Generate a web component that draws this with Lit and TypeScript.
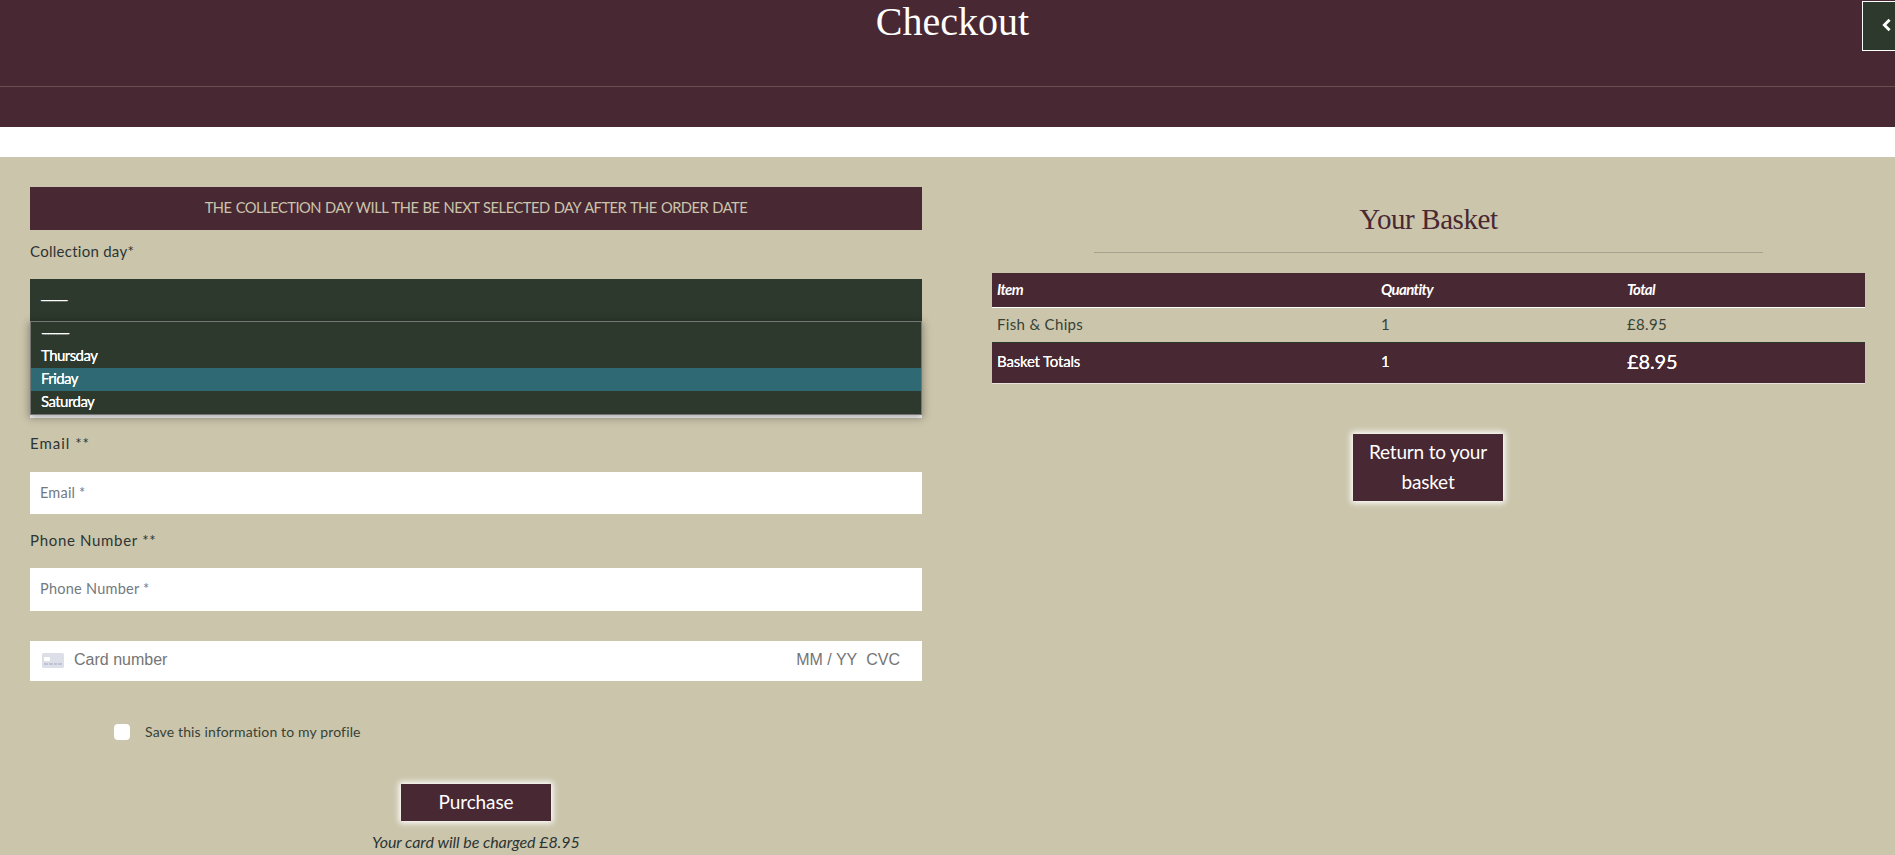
import { LitElement, html, css } from "lit";
import { customElement, property } from "lit/decorators.js";
import { classMap } from "lit/directives/class-map.js";

@customElement("page-header")
class PageHeader extends LitElement {
  static styles = css`
    :host { display: block; position: relative; height: 127px; background: #482832; color: #fff; }
    .title { box-sizing: border-box; height: 87px; margin: 0; border-bottom: 1px solid #69504f; text-align: center;
      font: 400 40px/44px "Liberation Serif", serif; padding-left: 10px; }
    .toggle { position: absolute; top: 1px; right: 0; box-sizing: border-box; width: 33px; height: 50px;
      border: 1px solid #fff; border-right: 0; background: #2d392d; display: flex; align-items: center; justify-content: flex-end; padding-right: 4px; }
    svg { display: block; margin-top: -2px; }
  `;
  render() {
    return html`<h1 class="title">Checkout</h1>
      <div class="toggle"><svg width="9" height="14" viewBox="0 0 9 14"><path d="M7.6 1.8 2.4 7l5.2 5.2" fill="none" stroke="#fff" stroke-width="2.9"/></svg></div>`;
  }
}

@customElement("day-select")
class DaySelect extends LitElement {
  static styles = css`
    :host { display: block; position: relative; color: #fff; font: 400 15px/21px Lato, sans-serif; }
    .control { height: 42px; box-sizing: border-box; background: #2d392d; padding: 10px 10px; }
    .dash { letter-spacing: -2.7px; }
    .menu { position: absolute; top: 42px; left: 0; right: 0; border: 1px solid #767676; background: #2d392d;
      box-shadow: 0 2px 8px 1px rgba(0, 0, 0, .34); }
    .option { height: 23px; padding-left: 10px; letter-spacing: -.55px; text-shadow: 0 0 .5px #fff; }
    .option.dash { letter-spacing: -2.65px; }
    .active { background: #2f6a74; }
  `;
  @property() options = ["---------", "Thursday", "Friday", "Saturday"];
  render() {
    return html`<div class="control"><span class="dash">---------</span></div>
      <div class="menu">${this.options.map((o, i) => html`<div class=${classMap({ option: true, dash: i === 0, active: i === 2 })}>${o}</div>`)}</div>`;
  }
}

@customElement("checkout-form")
class CheckoutForm extends LitElement {
  static styles = css`
    :host { display: block; width: 892px; color: #2c3533; font: 400 15px/22px Lato, sans-serif; }
    .notice { height: 43px; line-height: 41px; background: #482832; color: #cbc5ac; text-align: center; font-size: 14.7px; letter-spacing: -.49px; word-spacing: .8px; }
    .label { height: 24px; }
    .first { margin: 10px 0 15px; letter-spacing: .27px; }
    .field { box-sizing: border-box; height: 42px; background: #fff; padding: 0 10px; line-height: 41px; color: #727a81; font-size: 14.5px; letter-spacing: .2px; }
    .hidden-field { margin-top: 55px; }
    .email { margin: 14px 0 16px; letter-spacing: 1px; }
    .phone { margin: 15px 0 15px; letter-spacing: .68px; }
    .phone-field { height: 43px; letter-spacing: .25px; }
    .card { display: flex; align-items: center; height: 40px; margin-top: 30px; padding: 0 22px 2px 12px; box-sizing: border-box;
      background: #fff; color: #757575; font: 400 16px/20px "Liberation Sans", sans-serif; }
    .card svg { margin-right: 10px; }
    .number { flex: 1; }
    .expiry { margin-right: 9px; }
    .save { display: flex; align-items: center; height: 16px; margin: 43px 0 0 84px; font-size: 14px; color: #364236; letter-spacing: .14px; }
    .box { width: 16px; height: 16px; margin-right: 15px; border-radius: 4px; background: #fff; }
    .purchase { width: 150px; height: 37px; margin: 44px 0 0 371px; background: #482832; color: #fff; text-align: center;
      font-size: 19px; line-height: 35px; letter-spacing: -.1px; box-shadow: 0 0 6px 2px #fff; }
    .charge { margin: 10px 0 0 342px; font-style: italic; font-size: 16px; letter-spacing: -.06px; white-space: nowrap; }
  `;
  render() {
    return html`
      <div class="notice">THE COLLECTION DAY WILL THE BE NEXT SELECTED DAY AFTER THE ORDER DATE</div>
      <div class="label first">Collection day*</div>
      <day-select></day-select>
      <div class="field hidden-field"></div>
      <div class="label email">Email **</div>
      <div class="field">Email *</div>
      <div class="label phone">Phone Number **</div>
      <div class="field phone-field">Phone Number *</div>
      <div class="card">
        <svg width="22" height="15" viewBox="0 0 22 15"><rect width="22" height="15" rx="1.6" fill="#dcdfe8"/><rect x="2" y="4" width="6" height="4" rx="1" fill="#fff"/><path d="M2 11h4m1 0h4m1 0h3m1 0h4" stroke="#b5bacb" stroke-width="1.6"/></svg>
        <span class="number">Card number</span><span class="expiry">MM / YY</span><span>CVC</span>
      </div>
      <div class="save"><span class="box"></span>Save this information to my profile</div>
      <div class="purchase">Purchase</div>
      <div class="charge">Your card will be charged £8.95</div>`;
  }
}

@customElement("basket-summary")
class BasketSummary extends LitElement {
  static styles = css`
    :host { display: block; width: 873px; color: #364236; font: 400 15px/32px Lato, sans-serif; }
    .heading { box-sizing: border-box; width: 669px; height: 66px; margin: 0 0 20px 102px; border-bottom: 1px solid #aaa291;
      padding-top: 15px; text-align: center; color: #482832; font: 400 29px/34px "Liberation Serif", serif; letter-spacing: -.4px; }
    .row { display: grid; grid-template-columns: 384px 246px 1fr; padding-left: 5px; }
    .head { height: 34px; line-height: 33px; background: #482832; border-bottom: 1px solid #fff; color: #fff; font-weight: 700; font-style: italic; letter-spacing: -.65px; }
    .item { height: 34px; border-bottom: 1px solid #2d392d; letter-spacing: .33px; }
    .totals { height: 40px; line-height: 37px; background: #482832; border-bottom: 1px solid #e8e2df; color: #fff; letter-spacing: -.2px; text-shadow: 0 0 .5px #fff; }
    .sum { font-size: 20px; letter-spacing: -.1px; }
    .back { width: 150px; height: 67px; box-sizing: border-box; padding: 3px 12px 0; margin: 50px 0 0 361px; background: #482832; color: #fff;
      text-align: center; font-size: 19px; line-height: 30px; letter-spacing: -.2px; box-shadow: 0 0 6px 2px #fff; }
  `;
  render() {
    return html`
      <h2 class="heading">Your Basket</h2>
      <div class="row head"><span>Item</span><span>Quantity</span><span>Total</span></div>
      <div class="row item"><span>Fish &amp; Chips</span><span>1</span><span>£8.95</span></div>
      <div class="row totals"><span>Basket Totals</span><span>1</span><span class="sum">£8.95</span></div>
      <div class="back">Return to your basket</div>`;
  }
}

@customElement("app-root")
class AppRoot extends LitElement {
  static styles = css`
    :host { display: block; height: 855px; overflow: hidden; background: #fff; }
    .content { display: flex; align-items: flex-start; gap: 70px; box-sizing: border-box; height: 698px; margin-top: 30px; padding: 30px 30px 0; background: #cbc5ac; }
  `;
  render() {
    return html`<page-header></page-header>
      <main class="content"><checkout-form></checkout-form><basket-summary></basket-summary></main>`;
  }
}
